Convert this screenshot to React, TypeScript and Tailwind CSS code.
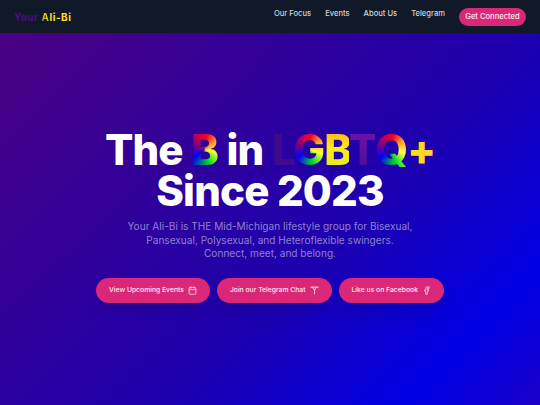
import { Calendar, Facebook } from "lucide-react";

const conic =
  "bg-[conic-gradient(from_10deg,#ff0018,#ffa52c_45deg,#ffff41_95deg,#00e020_150deg,#0000f9_220deg,#86007d_290deg,#ff0018)] bg-clip-text text-transparent";

function Btn({ label, children }: { label: string; children: React.ReactNode }) {
  return (
    <a className="flex h-[25px] items-center gap-[4px] rounded-full bg-[#db2777] px-[13px] text-[6.8px] font-medium text-[#fce7f3] shadow-lg">
      <span>{label}</span>
      {children}
    </a>
  );
}

export default function App() {
  return (
    <div className="flex h-[405px] w-[540px] flex-col overflow-hidden font-['Inter',sans-serif]">
      <header className="flex h-[33px] shrink-0 items-start justify-between bg-[#111827] pl-[14px] pr-[14px]">
        <div className="mt-[11px] text-[10px] font-bold leading-[12px] tracking-[0.05em]">
          <span className="text-[#4b0a8c]">Your </span>
          <span className="bg-[linear-gradient(35deg,#10a060,#e8c020_45%,#ffe01f)] bg-clip-text text-transparent">A</span>
          <span className="text-[#ffe01f]">li-Bi</span>
        </div>
        <nav className="flex items-start gap-[14px] text-[7.6px] font-medium text-[#d1d5db]">
          <a className="mt-[8px] leading-[11px]">Our Focus</a>
          <a className="mt-[8px] leading-[11px]">Events</a>
          <a className="mt-[8px] leading-[11px]">About Us</a>
          <a className="mt-[8px] leading-[11px]">Telegram</a>
          <a className="mt-[8px] flex h-[18px] w-[67px] items-center justify-center rounded-full bg-[#db2777] text-[#fce7f3]">
            Get Connected
          </a>
        </nav>
      </header>
      <main className="relative flex flex-1 flex-col items-center bg-[linear-gradient(135deg,#4b0082_0%,#2f009c_35%,#1c00b0_60%,#0000e6_85%,#1a00c8_100%)] pt-[96px]">
        <h1 className="text-center text-[42px] font-extrabold leading-[41px] tracking-[-0.02em] text-white">
          <div>
            The <span className={conic}>B</span> in{" "}
            <span className="text-[#3f0a8e]">L</span>
            <span className={conic}>G</span>
            <span className="bg-[linear-gradient(180deg,#ff9a1a,#ffe81f_45%,#d8f020)] bg-clip-text text-transparent">B</span>
            <span className="bg-[linear-gradient(180deg,#7a10b0,#40108c)] bg-clip-text text-transparent">T</span>
            <span className={conic}>Q</span>
            <span className="text-[#ffd81f]">+</span>
          </div>
          <div>Since 2023</div>
        </h1>
        <p className="mt-[9px] text-center text-[10.1px] leading-[13.5px] text-[#8f80cc]">
          Your Ali-Bi is THE Mid-Michigan lifestyle group for Bisexual,
          <br />
          Pansexual, Polysexual, and Heteroflexible swingers.
          <br />
          Connect, meet, and belong.
        </p>
        <div className="mt-[17px] flex gap-[7px]">
          <Btn label="View Upcoming Events"><Calendar size={9} /></Btn>
          <Btn label="Join our Telegram Chat">
            <svg width="9" height="9" viewBox="0 0 24 24" fill="none" stroke="currentColor" strokeWidth="2.4" strokeLinecap="round" strokeLinejoin="round">
              <path d="M2 3h20M6 3l6 8 6-8M12 11v10" />
            </svg>
          </Btn>
          <Btn label="Like us on Facebook"><Facebook size={9} /></Btn>
        </div>
      </main>
    </div>
  );
}
